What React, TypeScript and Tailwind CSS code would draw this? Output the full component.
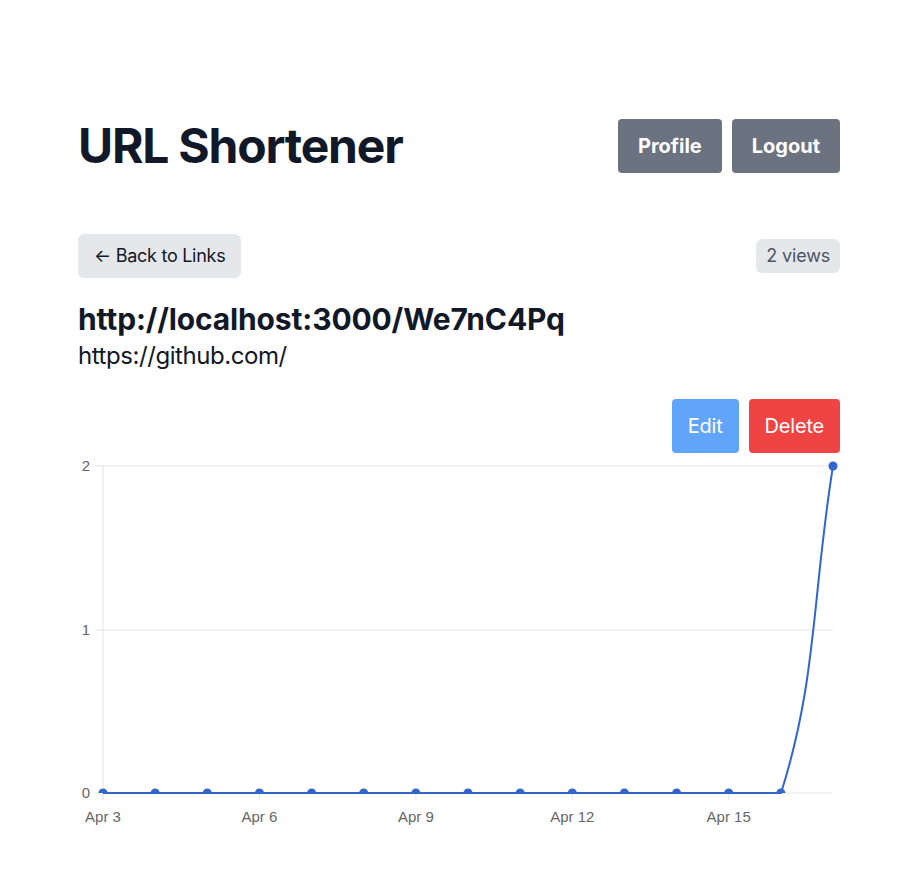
import React from "react";

const points = Array.from({ length: 15 }, (_, i) => ({
  x: 25 + i * 52.143,
  y: i === 14 ? 10 : 337,
}));

const labels = [
  { i: 0, text: "Apr 3" },
  { i: 3, text: "Apr 6" },
  { i: 6, text: "Apr 9" },
  { i: 9, text: "Apr 12" },
  { i: 12, text: "Apr 15" },
];

const ViewsChart = () => {
  const grid = "#e5e5e5";
  const blue = "#3366cc";
  const font = "'Liberation Sans', Arial, sans-serif";
  return (
    <svg width="762" height="375" viewBox="0 0 762 375" className="block">
      <defs>
        <clipPath id="area">
          <rect x="0" y="0" width="762" height="337" />
        </clipPath>
      </defs>
      {[10, 174, 337].map((y) => (
        <line key={y} x1="17" x2="755" y1={y} y2={y} stroke={grid} strokeWidth="1" />
      ))}
      <line x1="25" x2="25" y1="10" y2="344" stroke={grid} strokeWidth="1" />
      {labels.map((l) => (
        <line
          key={l.i}
          x1={points[l.i].x}
          x2={points[l.i].x}
          y1="337"
          y2="344"
          stroke={grid}
          strokeWidth="1"
        />
      ))}
      {[
        { y: 10, t: "2" },
        { y: 174, t: "1" },
        { y: 337, t: "0" },
      ].map((l) => (
        <text key={l.t} x="12" y={l.y + 5} textAnchor="end" fontSize="15" fill="#666" fontFamily={font}>
          {l.t}
        </text>
      ))}
      {labels.map((l) => (
        <text
          key={l.text}
          x={points[l.i].x}
          y="366"
          textAnchor="middle"
          fontSize="15"
          fill="#666"
          fontFamily={font}
        >
          {l.text}
        </text>
      ))}
      <path
        d="M25 337 L703 337 C739 224 734 141 755 10"
        fill="none"
        stroke={blue}
        strokeWidth="2"
      />
      <g clipPath="url(#area)">
        {points.slice(0, 14).map((p, i) => (
          <circle key={i} cx={p.x} cy={p.y} r="4.5" fill={blue} />
        ))}
      </g>
      <circle cx={points[14].x} cy={points[14].y} r="4.5" fill={blue} />
    </svg>
  );
};

export default function App() {
  return (
    <div className="min-h-screen bg-white font-['Inter',sans-serif] text-[#111827]">
      <div className="ml-[78px] w-[762px] pt-[119px] pb-10">
        <div className="flex items-center justify-between">
          <h1 className="text-5xl leading-none font-bold tracking-tight text-[#111827]">
            URL Shortener
          </h1>
          <div className="flex gap-[10px]">
            <button className="rounded bg-[#6b7280] px-5 py-[13px] text-xl font-bold text-white">
              Profile
            </button>
            <button className="rounded bg-[#6b7280] px-5 py-[13px] text-xl font-bold text-white">
              Logout
            </button>
          </div>
        </div>

        <div className="mt-[61px] flex items-center justify-between">
          <button className="rounded-md bg-[#e5e7eb] px-4 py-2 text-lg tracking-[-0.015em] text-[#111827]">
            ← Back to Links
          </button>
          <span className="rounded-md bg-[#e5e7eb] px-2.5 py-[3px] text-lg tracking-[-0.01em] text-[#4b5563]">
            2 views
          </span>
        </div>

        <h2 className="mt-[23px] text-3xl font-bold tracking-[-0.005em] text-[#111827]">
          http://localhost:3000/We7nC4Pq
        </h2>
        <p className="mt-[3px] text-2xl tracking-[-0.018em] text-[#111827]">https://github.com/</p>

        <div className="mt-[27px] flex justify-end gap-[10px]">
          <button className="rounded bg-[#60a5fa] px-4 py-[13px] text-xl tracking-[-0.01em] text-white">
            Edit
          </button>
          <button className="rounded bg-[#ef4444] px-4 py-[13px] text-xl tracking-[-0.01em] text-white">
            Delete
          </button>
        </div>

        <div className="mt-[3px]">
          <ViewsChart />
        </div>
      </div>
    </div>
  );
}
